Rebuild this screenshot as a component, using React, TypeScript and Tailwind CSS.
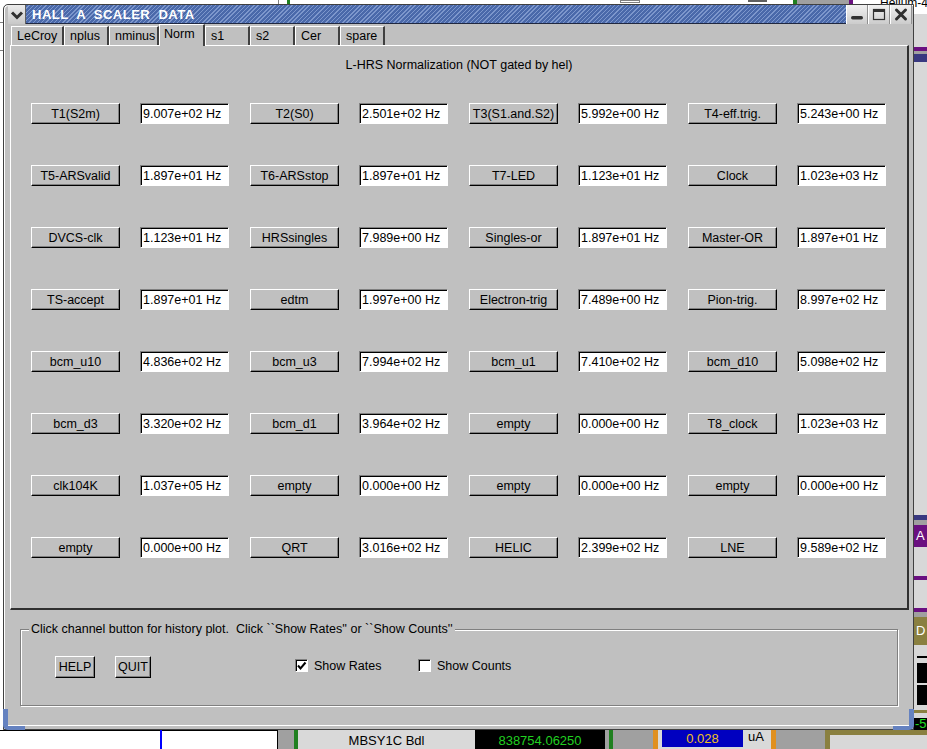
import React from "react";

const rows: [string, string][][] = [
  [["T1(S2m)", "9.007e+02 Hz"], ["T2(S0)", "2.501e+02 Hz"], ["T3(S1.and.S2)", "5.992e+00 Hz"], ["T4-eff.trig.", "5.243e+00 Hz"]],
  [["T5-ARSvalid", "1.897e+01 Hz"], ["T6-ARSstop", "1.897e+01 Hz"], ["T7-LED", "1.123e+01 Hz"], ["Clock", "1.023e+03 Hz"]],
  [["DVCS-clk", "1.123e+01 Hz"], ["HRSsingles", "7.989e+00 Hz"], ["Singles-or", "1.897e+01 Hz"], ["Master-OR", "1.897e+01 Hz"]],
  [["TS-accept", "1.897e+01 Hz"], ["edtm", "1.997e+00 Hz"], ["Electron-trig", "7.489e+00 Hz"], ["Pion-trig.", "8.997e+02 Hz"]],
  [["bcm_u10", "4.836e+02 Hz"], ["bcm_u3", "7.994e+02 Hz"], ["bcm_u1", "7.410e+02 Hz"], ["bcm_d10", "5.098e+02 Hz"]],
  [["bcm_d3", "3.320e+02 Hz"], ["bcm_d1", "3.964e+02 Hz"], ["empty", "0.000e+00 Hz"], ["T8_clock", "1.023e+03 Hz"]],
  [["clk104K", "1.037e+05 Hz"], ["empty", "0.000e+00 Hz"], ["empty", "0.000e+00 Hz"], ["empty", "0.000e+00 Hz"]],
  [["empty", "0.000e+00 Hz"], ["QRT", "3.016e+02 Hz"], ["HELIC", "2.399e+02 Hz"], ["LNE", "9.589e+02 Hz"]],
];

const tabs: [string, number][] = [
  ["LeCroy", 53],
  ["nplus", 45],
  ["nminus", 50],
  ["Norm", 46],
  ["s1", 45],
  ["s2", 45],
  ["Cer", 45],
  ["spare", 45],
];

function TkButton({ label, w }: { label: string; w: string }) {
  return (
    <div
      className={`${w} h-[21px] shrink-0 flex items-center justify-center bg-[#c0c0c0] border border-t-white border-l-white border-r-black border-b-black shadow-[inset_-1px_-1px_0_#808080] text-[12.5px] leading-none text-black pt-[1px]`}
    >
      {label}
    </div>
  );
}

function Entry({ value }: { value: string }) {
  return (
    <div className="w-[89px] h-[21px] shrink-0 flex items-center bg-white border border-t-[#808080] border-l-[#808080] border-b-white border-r-white shadow-[inset_1px_1px_0_#000] pl-[2px] pt-[1px] text-[12.5px] leading-none text-black">
      {value}
    </div>
  );
}

function CheckBox({ checked }: { checked: boolean }) {
  return (
    <div className="w-[13px] h-[13px] shrink-0 bg-white border border-t-[#808080] border-l-[#808080] border-b-white border-r-white shadow-[inset_1px_1px_0_#000] flex items-center justify-center">
      {checked && (
        <svg width="11" height="11" viewBox="0 0 11 11">
          <path d="M2 5.5 L4.5 8.5 L9.5 2.5" stroke="#000" strokeWidth="2" fill="none" />
        </svg>
      )}
    </div>
  );
}

export default function App() {
  return (
    <div className="relative w-[927px] h-[749px] overflow-hidden bg-white font-['Liberation_Sans',Arial,sans-serif] text-black">
      {/* desktop background pieces */}
      <div className="absolute left-[278px] top-0 w-[1px] h-[4px] bg-[#808080]" />
      <div className="absolute left-[287px] top-0 w-[3px] h-[4px] bg-[#208020]" />
      <div className="absolute left-[620px] top-0 w-[20px] h-[3px] border border-[#808080]" />
      <div className="absolute left-[748px] top-0 w-[19px] h-[2px] bg-[#606060]" />
      <div className="absolute left-[793px] top-0 w-[4px] h-[4px] bg-[#208020]" />
      <div className="absolute left-[797px] top-0 w-[52px] h-[4px] bg-[#a0a0a0]" />
      <div className="absolute left-[849px] top-0 w-[4px] h-[4px] bg-[#6a1080]" />
      <div className="absolute left-[880px] top-[-3px] text-[12px] leading-none whitespace-nowrap">Helium-4</div>
      <div className="absolute left-0 top-[22px] w-[3px] h-[1px] bg-[#808080]" />
      <div className="absolute left-0 top-[50px] w-[3px] h-[1px] bg-[#808080]" />

      {/* right strip */}
      <div className="absolute left-[914px] top-[14px] w-[13px] h-[716px] bg-[#d8d8d8]" />
      <div className="absolute left-[914px] top-[47px] w-[13px] h-[4px] bg-[#6a1080]" />
      <div className="absolute left-[914px] top-[51px] w-[13px] h-[3px] bg-[#a0a0a0]" />
      <div className="absolute left-[914px] top-[54px] w-[13px] h-[8px] bg-[#383880]" />
      <div className="absolute left-[914px] top-[515px] w-[13px] h-[5px] bg-[#383880]" />
      <div className="absolute left-[914px] top-[520px] w-[13px] h-[5px] bg-[#a0a0a0]" />
      <div className="absolute left-[914px] top-[525px] w-[13px] h-[22px] bg-[#6a1080] text-white text-[13px] leading-[22px] pl-[2px]">A</div>
      <div className="absolute left-[914px] top-[576px] w-[13px] h-[4px] bg-[#6a1080]" />
      <div className="absolute left-[914px] top-[608px] w-[13px] h-[4px] bg-[#6a1080]" />
      <div className="absolute left-[914px] top-[612px] w-[13px] h-[5px] bg-[#a0a0a0]" />
      <div className="absolute left-[914px] top-[617px] w-[13px] h-[28px] bg-[#8a8040] text-white text-[13px] leading-[28px] pl-[2px]">D</div>
      <div className="absolute left-[917px] top-[656px] w-[10px] h-[2px] bg-black" />
      <div className="absolute left-[917px] top-[663px] w-[10px] h-[20px] bg-black" />
      <div className="absolute left-[917px] top-[685px] w-[10px] h-[20px] bg-black" />
      <div className="absolute left-[914px] top-[710px] w-[13px] h-[3px] bg-[#8a8040]" />
      <div className="absolute left-[905px] top-[718px] w-[22px] h-[19px] bg-black" />
      <div className="absolute left-[915px] top-[717px] text-[#20e020] text-[13px] leading-none">-5</div>

      {/* bottom strip */}
      <div className="absolute left-0 top-[730px] w-[278px] h-[19px] bg-white border-t border-r border-black" />
      <div className="absolute left-[160px] top-[730px] w-[2px] h-[19px] bg-[#0000ff]" />
      <div className="absolute left-[278px] top-[730px] w-[649px] h-[19px] flex">
        <div className="w-[16px] bg-[#a0a0a0]" />
        <div className="w-[4px] bg-[#208020]" />
        <div className="w-[177px] bg-[#d9d9d9] flex items-center justify-center text-[13px] leading-none pt-[2px]">MBSY1C Bdl</div>
        <div className="w-[130px] bg-black flex items-center justify-center text-[13px] leading-none text-[#20d020] pt-[2px]">838754.06250</div>
        <div className="w-[4px] bg-[#a0a0a0]" />
        <div className="w-[4px] bg-[#208020]" />
        <div className="w-[40px] bg-[#a0a0a0]" />
        <div className="w-[5px] bg-[#e09020]" />
        <div className="w-[113px] bg-[#d9d9d9] flex items-start pl-[4px]">
          <div className="w-[81px] h-[17px] bg-[#0000c0] flex items-center justify-center text-[13px] leading-none text-[#f0c020]">0.028</div>
          <div className="ml-[5px] text-[13px] leading-[14px]">uA</div>
        </div>
        <div className="w-[5px] bg-[#e09020]" />
        <div className="w-[49px] bg-[#a0a0a0]" />
        <div className="flex-1 bg-[#8a8040] pl-[5px] pt-[5px]">
          <div className="w-full h-full bg-[#d8d8d8]" />
        </div>
      </div>

      {/* window */}
      <div className="absolute left-[3px] top-[4px] w-[911px] h-[726px] border border-[#404040] rounded-tl-[5px] bg-[#c0c0c0] shadow-[inset_1px_1px_0_#ffffff] pl-[4px] pr-[3px] pb-[3px] flex flex-col">
        {/* title bar */}
        <div className="h-[19px] flex -mr-[2px] shrink-0">
          <div className="w-[18px] bg-[linear-gradient(#ececec,#c8c8c8)] border-r border-[#606060] flex items-center justify-center">
            <svg width="14" height="10" viewBox="0 0 14 10">
              <path d="M2 2.5 L7 7.5 L12 2.5" stroke="#303030" strokeWidth="3" fill="none" />
            </svg>
          </div>
          <div className="flex-1 bg-[repeating-linear-gradient(135deg,#4a69aa_0px,#4a69aa_2px,#7d97cc_2px,#7d97cc_3px)] border-b border-[#202840] flex items-center pl-[6px]">
            <span className="text-white font-bold text-[13px] leading-none tracking-[0.5px] whitespace-pre">HALL  A  SCALER  DATA</span>
          </div>
          {["min", "max", "close"].map((k) => (
            <div
              key={k}
              className="w-[22px] bg-[linear-gradient(#f0f0f0,#cccccc)] border-l border-white border-r border-r-[#909090] flex items-center justify-center"
            >
              <svg width="20" height="19" viewBox="0 0 20 19">
                {k === "min" && <rect x="4" y="11" width="12" height="3.5" rx="1.7" fill="#303030" />}
                {k === "max" && (
                  <g>
                    <rect x="4.5" y="4.5" width="11" height="10" stroke="#303030" strokeWidth="1.2" fill="none" />
                    <rect x="4" y="4" width="12" height="3" fill="#303030" />
                  </g>
                )}
                {k === "close" && (
                  <g stroke="#303030" strokeWidth="3" strokeLinecap="round">
                    <path d="M5.5 5 L14.5 14" />
                    <path d="M14.5 5 L5.5 14" />
                  </g>
                )}
              </svg>
            </div>
          ))}
        </div>

        {/* client */}
        <div className="flex-1 flex flex-col bg-[#c0c0c0]">
          {/* tabs */}
          <div className="h-[21px] flex items-end pl-[3px] shrink-0">
            {tabs.map(([t, w]) => {
              const sel = t === "Norm";
              return (
                <div
                  key={t}
                  style={{ width: w }}
                  className={
                    sel
                      ? "relative z-10 h-[22px] -mb-[1px] bg-[#c0c0c0] border-t border-l border-white border-r-2 border-r-[#404040] pl-[4px] pb-[3px] flex items-center text-[12.5px] leading-none"
                      : "h-[19px] bg-[#c0c0c0] border-t border-l border-white border-r-2 border-r-[#404040] pl-[5px] pt-[1px] flex items-center text-[12.5px] leading-none"
                  }
                >
                  {t}
                </div>
              );
            })}
          </div>

          {/* main panel */}
          <div className="h-[565px] ml-[2px] mr-[1px] shrink-0 border-t border-l border-white border-r-2 border-b-2 border-r-[#303030] border-b-[#303030] flex flex-col">
            <div className="mt-[11px] h-[16px] flex items-center justify-center text-[12.5px] leading-none pt-[1px]">
              L-HRS Normalization (NOT gated by hel)
            </div>
            <div className="mt-[30px] pl-[20px] flex flex-col gap-y-[41px]">
              {rows.map((r, i) => (
                <div key={i} className="flex gap-x-[21px]">
                  {r.map(([b, v], j) => (
                    <div key={j} className="flex gap-x-[20px]">
                      <TkButton label={b} w="w-[89px]" />
                      <Entry value={v} />
                    </div>
                  ))}
                </div>
              ))}
            </div>
          </div>

          {/* bottom area */}
          <div className="flex-1 pt-[19px] px-[12px] border-b border-white">
            <div className="relative h-[77px] border border-[#808080] shadow-[1px_1px_0_#ffffff,inset_1px_1px_0_#ffffff]">
              <div className="absolute left-[8px] top-[-8px] px-[2px] bg-[#c0c0c0] text-[12.5px] leading-[14px] whitespace-pre">
                {"Click channel button for history plot.  Click ``Show Rates'' or ``Show Counts''"}
              </div>
              <div className="flex items-start pl-[34px] pt-[26px]">
                <TkButton label="HELP" w="w-[40px] h-[22px]" />
                <div className="ml-[20px]">
                  <TkButton label="QUIT" w="w-[36px] h-[22px]" />
                </div>
                <div className="ml-[144px] mt-[3px] w-[123px] flex items-center">
                  <CheckBox checked={true} />
                  <span className="ml-[6px] text-[12.5px] leading-none pt-[1px]">Show Rates</span>
                </div>
                <div className="mt-[3px] flex items-center">
                  <CheckBox checked={false} />
                  <span className="ml-[6px] text-[12.5px] leading-none pt-[1px]">Show Counts</span>
                </div>
              </div>
            </div>
          </div>
        </div>

        {/* resize corners */}
        <div className="absolute left-[-1px] bottom-[-1px] w-[22px] h-[21px] border-l-[5px] border-b-[4px] border-[#6582c0] rounded-bl-[5px]" />
        <div className="absolute right-[-1px] bottom-[-1px] w-[21px] h-[21px] border-r-[5px] border-b-[4px] border-[#6582c0] rounded-br-[5px]" />
      </div>
    </div>
  );
}
